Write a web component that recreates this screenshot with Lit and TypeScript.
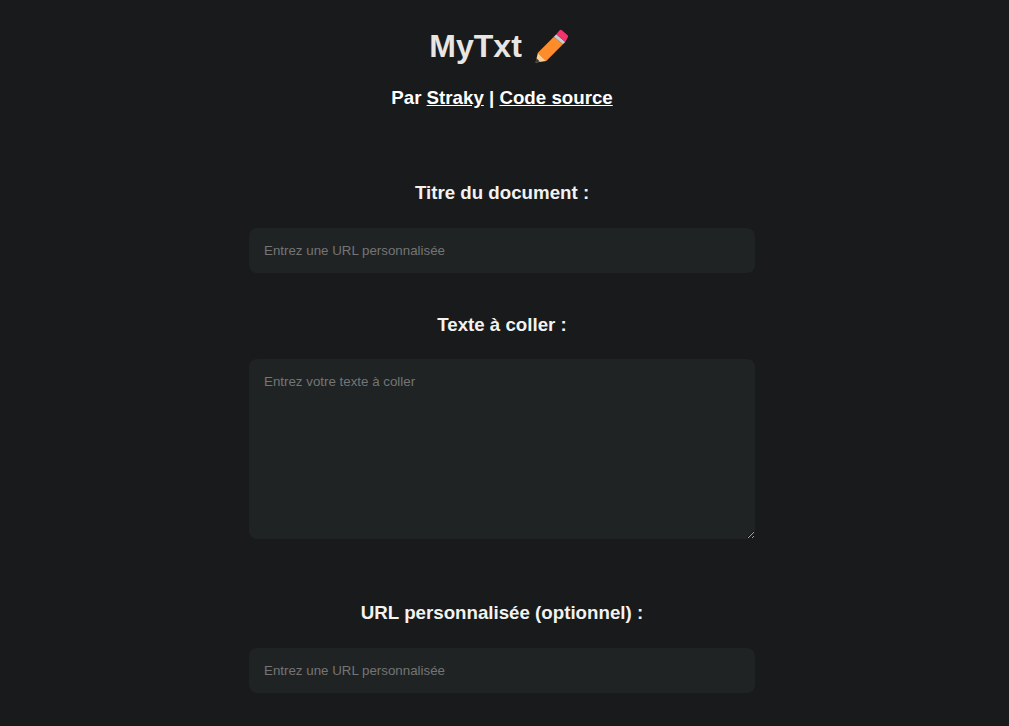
import { LitElement, html, css } from "lit";
import { customElement } from "lit/decorators.js";

@customElement("app-root")
export class AppRoot extends LitElement {
  static styles = css`
    :host {
      display: block;
      min-height: 726px;
      background: #181a1b;
      color: #e8e6e3;
      font-family: "Liberation Sans", Arial, sans-serif;
    }
    * { box-sizing: border-box; }
    .page {
      display: flex;
      flex-direction: column;
      align-items: center;
      width: 1004px;
      padding-top: 28px;
    }
    h1 {
      display: flex;
      align-items: center;
      margin: 0;
      height: 37px;
      font-size: 32px;
      line-height: 37px;
      font-weight: 700;
      white-space: pre;
    }
    h1 svg { display: block; width: 44px; height: 44px; flex: none; }
    .sub {
      margin: 22px 0 0;
      height: 21px;
      font-size: 18.72px;
      line-height: 21px;
      font-weight: 700;
      color: #fff;
    }
    .sub a { color: #fff; text-decoration: underline; }
    form {
      display: flex;
      flex-direction: column;
      width: 506px;
      margin-top: 74px;
    }
    label {
      display: block;
      height: 21px;
      font-size: 18.72px;
      line-height: 21px;
      font-weight: 700;
      text-align: center;
      color: #f2f2f0;
    }
    .control {
      display: block;
      width: 100%;
      margin: 25px 0 0;
      padding: 15px;
      border: 0;
      border-radius: 8px;
      outline: 0;
      background: #1f2324;
      color: #e8e6e3;
      font-family: "Liberation Sans", Arial, sans-serif;
      font-size: 13.333px;
      line-height: 15px;
    }
    input.control { height: 45px; }
    textarea.control { height: 180px; resize: vertical; margin-top: 24px; }
    .control::placeholder { color: #757575; opacity: 1; }
    .second { margin-top: 41px; }
    .third { margin-top: 63px; }
  `;

  render() {
    return html`
      <div class="page">
        <h1>MyTxt <svg viewBox="0 0 44 44" aria-hidden="true">
          <polygon points="6.9,27.7 22.9,11.7 31.9,19.3 15.3,36" fill="#ff8c2b"></polygon>
          <polygon points="6.9,27.7 15.3,36 4.6,37.4" fill="#ffcf8f"></polygon>
          <polygon points="5.4,33 8.8,36.5 4.6,37.4" fill="#3a3a3a"></polygon>
          <polygon points="22.9,11.7 25.3,9.3 34.3,17 31.9,19.3" fill="#c9cdd0"></polygon>
          <path d="M25.3 9.3 L28.4 5.4 Q29.6 4.4 30.9 5.3 L36.6 10.2 Q37.6 11.5 36.6 12.8 L34.3 17 Z" fill="#f5336b"></path>
        </svg></h1>
        <p class="sub">Par <a href="#">Straky</a> | <a href="#">Code source</a></p>
        <form @submit=${(e: Event) => e.preventDefault()}>
          <label for="title">Titre du document :</label>
          <input class="control" id="title" type="text" placeholder="Entrez une URL personnalisée" />
          <label class="second" for="text">Texte à coller :</label>
          <textarea class="control" id="text" placeholder="Entrez votre texte à coller"></textarea>
          <label class="third" for="url">URL personnalisée (optionnel) :</label>
          <input class="control" id="url" type="text" placeholder="Entrez une URL personnalisée" />
        </form>
      </div>
    `;
  }
}
